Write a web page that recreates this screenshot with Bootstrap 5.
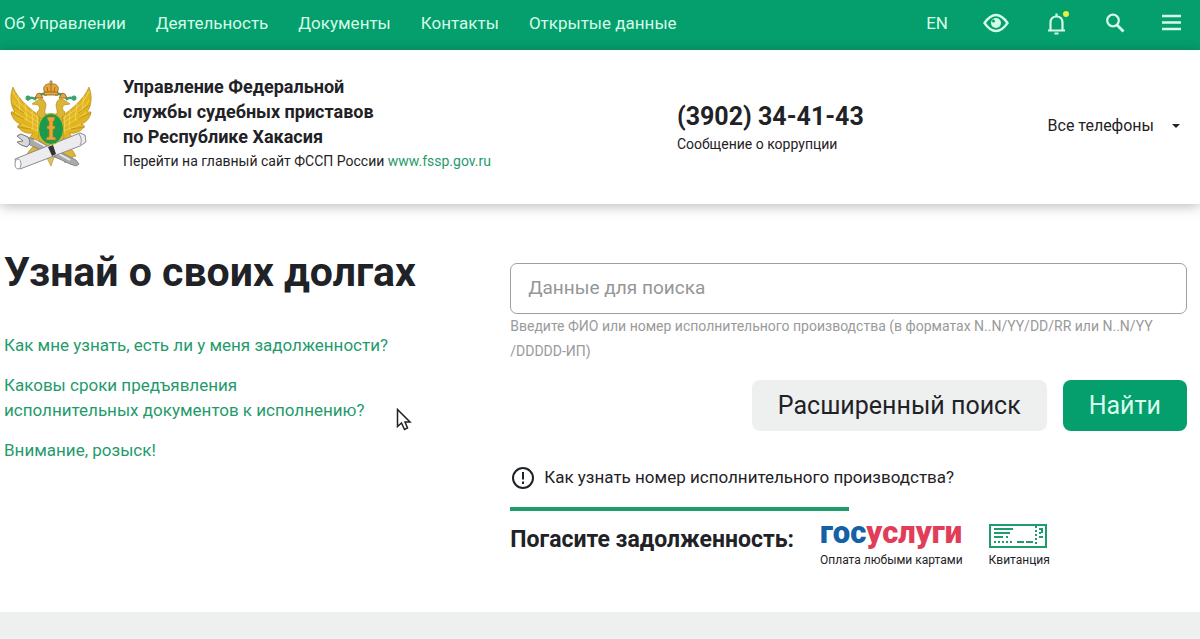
<!DOCTYPE html>
<html lang="ru">
<head>
<meta charset="utf-8">
<meta name="viewport" content="width=device-width, initial-scale=1">
<title>УФССП по Республике Хакасия</title>
<link href="https://cdn.jsdelivr.net/npm/bootstrap@5.3.0/dist/css/bootstrap.min.css" rel="stylesheet">
<style>
  :root { --brand: #049f6c; --link: #1f9b6c; --ink: #1f2226; }
  body { font-family: Roboto, "Liberation Sans", sans-serif; font-size: 17px; line-height: 25px; color: var(--ink); }
  a { color: var(--link); text-decoration: none; }
  .topbar { background: var(--brand); min-height: 50px; padding: 0 19px 4px 4px; }
  .topbar a { color: #d5fbe8; font-size: 17px; }
  .topmenu { gap: 30px; }
  .tools { gap: 35px; }
  .tools button { background: none; border: 0; padding: 0; line-height: 1; }
  .site-head { min-height: 154px; padding: 24px 20px 31px 10px; box-shadow: 0 2px 12px rgba(0,0,0,.28); }
  .brand-block { width: 57%; gap: 31px; }
  .emblem { margin-top: 6px; }
  .site-name { font-size: 18px; line-height: 25px; font-weight: 700; }
  .note { font-size: 14px; line-height: 24px; }
  .phone { font-size: 25px; line-height: 30px; font-weight: 700; color: var(--ink); }
  .phones-btn { font-size: 16px; color: var(--ink); }
  .phones-btn::after { margin-left: 18px; }
  .debts { padding: 40px 13px 40px 4px; }
  .debts-row { --bs-gutter-x: 32px; }
  .debts h1 { font-size: 41px; line-height: 56px; font-weight: 700; margin-bottom: 33px; }
  .faq li { margin-bottom: 15px; }
  .search-box { height: 51px; font-size: 19px; padding: 0 17px 3px; border: 1px solid #a0a0a0; border-radius: 7px; margin-top: 19px; }
  .search-box::placeholder { color: #969696; }
  .hint { font-size: 14px; line-height: 25px; color: #9a9a9a; }
  .act { font-size: 25px; line-height: 39px; padding: 6px 26px; border-radius: 8px; }
  .act-grey { background: #eef0ef; color: var(--ink); }
  .act-green { background: var(--brand); color: #d9fdec; }
  .help-line { margin: 34px 0 17px; }
  .rule { height: 4px; background: var(--link); }
  .pay { gap: 26px; margin-top: 7px; }
  .pay-title { font-size: 23px; line-height: 30px; font-weight: 700; margin-top: 7px; }
  .pay-note { font-size: 12px; line-height: 18px; color: var(--ink); }
  .pay-logo { font-size: 31px; line-height: 30px; font-weight: 900; color: #e23d58; margin-bottom: 3px; }
  .pay-logo span { color: #1461a6; }
  .ticket { margin: 6px 0 3px; }
  .page-foot { background: #eef0ef; min-height: 27px; }
  .pointer { left: 396px; top: 408px; }
</style>
</head>
<body class="d-flex flex-column min-vh-100 position-relative">
<nav class="topbar d-flex align-items-center justify-content-between" aria-label="Главное меню">
  <div class="topmenu d-flex">
    <a href="#">Об Управлении</a>
    <a href="#">Деятельность</a>
    <a href="#">Документы</a>
    <a href="#">Контакты</a>
    <a href="#">Открытые данные</a>
  </div>
  <div class="tools d-flex align-items-center">
    <a href="#">EN</a>
    <button type="button" aria-label="Версия для слабовидящих">
      <svg width="26" height="20" viewBox="0 0 26 20" fill="none" stroke="#d5fbe8" stroke-width="2.300"><path d="M1.500 10Q7 2 13 2T24.500 10Q19 18 13 18T1.500 10Z"/><circle cx="13" cy="10" r="5" fill="#d5fbe8" stroke="none"/><circle cx="10.500" cy="8" r="1.500" fill="#049f6c" stroke="none"/></svg>
    </button>
    <button type="button" aria-label="Уведомления">
      <svg width="26" height="26" viewBox="0 0 26 26" fill="none" stroke="#d5fbe8" stroke-width="2.200"><path d="M4 20.500H21M6.500 20V13Q6.500 6.500 12.500 6.500T18.500 13V20"/><path d="M12.500 3.500V7M10.500 23.500H14.500"/><circle cx="22" cy="4" r="3" fill="#e9ee3f" stroke="none"/></svg>
    </button>
    <button type="button" aria-label="Поиск">
      <svg width="22" height="22" viewBox="0 0 22 22" fill="none" stroke="#d5fbe8" stroke-width="2.200"><circle cx="8" cy="8.500" r="5.800"/><path d="M12 13L18.500 19.500" stroke-width="2.800"/></svg>
    </button>
    <button type="button" aria-label="Меню">
      <svg width="19" height="18" viewBox="0 0 19 18" stroke="#d5fbe8" stroke-width="2.400"><path d="M0 2H19M0 8.500H19M0 15H19"/></svg>
    </button>
  </div>
</nav>

<header class="site-head d-flex align-items-start">
  <div class="brand-block d-flex flex-shrink-0 me-auto">
    <svg class="emblem flex-shrink-0" width="82" height="92" viewBox="0 0 82 92" role="img" aria-label="Герб ФССП">
      <g id="wing" fill="#e2b51e" stroke="#a8841c" stroke-width=".6">
        <path d="M31 37C23 31 8 20 3 7C-1 17 1 27 5 32C2 32 1 31 1 33C3 40 7 43 11 44C8 45 7 46 8 47C12 53 19 54 23 53C20 56 20 58 21 60C25 61 30 59 33 56Z"/>
        <path d="M3 11C7 23 19 32 31 40M3 20C8 30 20 37 31 44M5 32C12 38 21 42 31 48M11 44C18 48 25 49 31 52M8 16L10 31M15 24L17 40M22 30L23 49M27 34L28 55" fill="none" stroke="#f6e27c"/>
        <path d="M1 33L14 39M7 47L21 49M2 25L14 33" fill="none"/>
      </g>
      <use href="#wing" transform="translate(82 0) scale(-1 1)"/>
      <g fill="#dcb532" stroke="#a8841c" stroke-width=".6">
        <path d="M28 57C31 66 36 72 41 75C46 72 51 66 54 57L52 34H30Z"/>
        <path d="M39 38C33 35 35 30 36 26C36 20 31 17 28 20L22 24L28 25C30 27 30 30 27 32C27 37 33 41 39 42Z"/>
        <path d="M43 38C49 35 47 30 46 26C46 20 51 17 54 20L60 24L54 25C52 27 52 30 55 32C55 37 49 41 43 42Z"/>
        <path d="M29 60L19 71L16 76L20 77L18 83L23 79L27 83L28 77L36 66ZM53 60L63 71L66 76L62 77L64 83L59 79L55 83L54 77L46 66Z"/>
        <path d="M35 73L41 69L47 73L50 79L44 77L41 86L37 78L31 79Z" fill="#dcc562"/>
      </g>
      <path d="M17 20Q21 16 25 19Q31 12 37 15M65 20Q61 16 57 19Q51 12 45 15" fill="none" stroke="#3ca36c" stroke-width="2.500"/>
      <circle cx="18" cy="18" r="2.500" fill="#3ca36c"/><circle cx="64" cy="18" r="2.500" fill="#3ca36c"/>
      <g fill="#e5a93a" stroke="#985b19" stroke-width=".8">
        <path d="M35 13C31 6 37 3 41 4C45 3 51 6 47 13Z"/><path d="M41 0V14M39 2H43M37 7L38 12M45 7L44 12" fill="none"/><path d="M34 12H48V15H34Z"/>
        <path d="M25 18L27 14L30 13L33 18ZM49 18L52 13L55 14L57 18Z"/>
      </g>
      <path d="M17 57L24 59L66 80L69 84L66 86L60 84L18 64Z" fill="#aaa" stroke="#777" stroke-width=".8"/>
      <path d="M7 56L11 54L18 57Q22 63 17 67L11 65L7 62L13 61Z" fill="#d8d8d8" stroke="#777"/>
      <path d="M24 60L60 80" stroke="#eee" stroke-width="1.500"/>
      <path d="M5 79L70 53L75 55L76 62L70 66L10 89L6 86Z" fill="#ececf0" stroke="#8c8c92"/>
      <ellipse cx="8" cy="84" rx="3" ry="5" fill="#fff" stroke="#999"/><path d="M69 54Q73 60 70 65" fill="none" stroke="#999"/>
      <path d="M38 67L43 65L46 74L42 76Z" fill="#333"/>
      <ellipse cx="41" cy="49" rx="12.500" ry="15.500" fill="#169c4c" stroke="#d6b32b"/>
      <path d="M37 37H45L44 41H43V46H45V49H43V57H45L46 60H36L37 57H39V49H37V46H39V41H38Z" fill="#e5a734" stroke="#b36e22" stroke-width=".6"/>
    </svg>
    <div>
      <div class="site-name">Управление Федеральной<br>службы судебных приставов<br>по Республике Хакасия</div>
      <div class="note">Перейти на главный сайт ФССП России <a href="#">www.fssp.gov.ru</a></div>
    </div>
  </div>
  <div class="pt-1 flex-grow-1">
    <a class="phone d-block mt-4" href="tel:+73902344143">(3902) 34-41-43</a>
    <div class="note">Сообщение о коррупции</div>
  </div>
  <button type="button" class="phones-btn btn p-0 border-0 d-flex align-items-center mt-4 pt-3 dropdown-toggle">Все телефоны</button>
</header>

<main class="debts">
  <div class="row debts-row">
    <section class="col-5">
      <h1>Узнай о своих долгах</h1>
      <ul class="faq list-unstyled mb-0">
        <li><a href="#">Как мне узнать, есть ли у меня задолженности?</a></li>
        <li><a href="#">Каковы сроки предъявления<br>исполнительных документов к исполнению?</a></li>
        <li><a href="#">Внимание, розыск!</a></li>
      </ul>
    </section>
    <section class="col-7">
      <form>
        <input class="search-box form-control" type="text" placeholder="Данные для поиска" aria-label="Данные для поиска" aria-describedby="hint">
        <div class="hint" id="hint">Введите ФИО или номер исполнительного производства (в форматах N..N/YY/DD/RR или N..N/YY<br>/DDDDD-ИП)</div>
        <div class="d-flex justify-content-end gap-3 mt-3">
          <button type="button" class="act act-grey btn border-0">Расширенный поиск</button>
          <button type="submit" class="act act-green btn border-0">Найти</button>
        </div>
      </form>
      <div class="help-line d-flex align-items-center">
        <svg class="me-2" width="26" height="24" viewBox="0 0 26 24" fill="none" stroke="#1f2226" stroke-width="2"><circle cx="13" cy="12" r="10"/><path d="M13 6V13.500M13 15.500V18"/></svg>
        <a class="text-reset" href="#">Как узнать номер исполнительного производства?</a>
      </div>
      <div class="rule w-50"></div>
      <div class="pay d-flex align-items-start">
        <div class="pay-title">Погасите задолженность:</div>
        <a class="pay-note" href="#"><span class="pay-logo d-block"><span>гос</span>услуги</span>Оплата любыми картами</a>
        <a class="pay-note" href="#">
          <svg class="ticket d-block" width="58" height="24" viewBox="0 0 58 24" fill="none" stroke="#1f9b6c" stroke-width="2"><path d="M1 1H57V23H1Z"/><path d="M5 5H24M5 9H21M5 13H14M17 13H19"/><path d="M5 18H25" stroke-dasharray="2 2"/><path d="M28 18H35M37 18H44"/><path d="M47 2V22" stroke-dasharray="2 2"/><path d="M50 5H54M53 6V9M50 9H52M50 13H52M53 12V14"/></svg>
          Квитанция</a>
      </div>
    </section>
  </div>
</main>
<footer class="page-foot mt-auto"></footer>
<svg class="pointer position-absolute" width="16" height="24" viewBox="0 0 16 24" aria-hidden="true"><path d="M1.500 1.500V18.500L5.500 15L8.500 21.500L11.500 20L9 14H14Z" fill="#fff" stroke="#222" stroke-width="1.500"/></svg>
<script src="https://cdn.jsdelivr.net/npm/bootstrap@5.3.0/dist/js/bootstrap.bundle.min.js"></script>
</body>
</html>
